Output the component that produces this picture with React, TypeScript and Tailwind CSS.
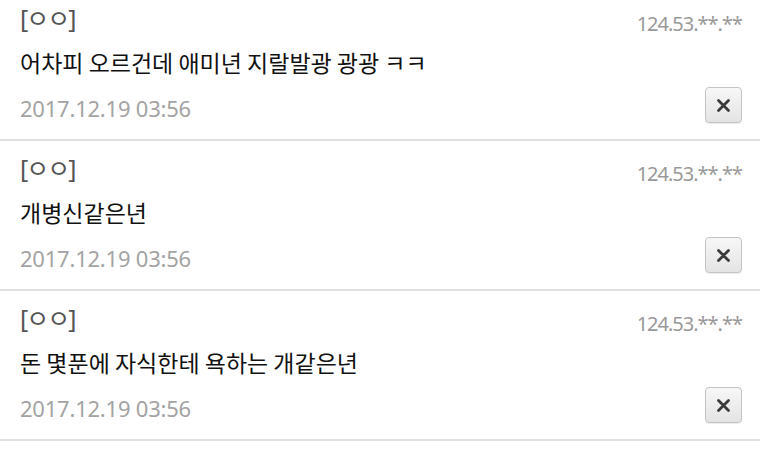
const comments = [
  { name: "[ㅇㅇ]", ip: "124.53.**.**", text: "어차피 오르건데 애미년 지랄발광 광광 ㅋㅋ", date: "2017.12.19 03:56" },
  { name: "[ㅇㅇ]", ip: "124.53.**.**", text: "개병신같은년", date: "2017.12.19 03:56" },
  { name: "[ㅇㅇ]", ip: "124.53.**.**", text: "돈 몇푼에 자식한테 욕하는 개같은년", date: "2017.12.19 03:56" },
];

function CloseButton() {
  return (
    <button className="flex h-[36px] w-[37px] items-center justify-center rounded-[4px] border border-[#c4c4c4] bg-gradient-to-b from-[#f7f7f7] to-[#e4e4e4] shadow-[0_1px_1px_rgba(0,0,0,0.08)]">
      <svg width="15" height="15" viewBox="0 0 15 15">
        <path d="M2.5 2.5 L12.5 12.5 M12.5 2.5 L2.5 12.5" stroke="#3a3a3a" strokeWidth="2.8" strokeLinecap="round" />
      </svg>
    </button>
  );
}

export default function App() {
  return (
    <div
      className="h-[452px] w-[760px] overflow-hidden bg-white"
      style={{ fontFamily: '"Noto Sans", "Noto Sans CJK KR", sans-serif' }}
    >
      <ul className="-mt-[9px]">
        {comments.map((c, i) => (
          <li key={i} className="border-b-2 border-[#e0e0e0] pl-[20px] pr-[18px] pt-[10px] pb-[16px]">
            <div className="flex h-[36px] items-start justify-between">
              <span className="mt-[1px] text-[25px] leading-[32px] tracking-[-0.08em] text-[#555]">{c.name}</span>
              <span className="mt-[8px] text-[20px] leading-[30px] tracking-[-0.05em] text-[#999]">{c.ip}</span>
            </div>
            <p className="mt-[10px] text-[23px] leading-[30px] text-[#111]" style={{ fontFamily: '"Noto Sans CJK KR", sans-serif' }}>
              {c.text}
            </p>
            <div className="mt-[10px] flex items-center justify-between">
              <span className="pt-[6px] text-[22px] leading-[30px] tracking-[-0.01em] text-[#a3a3a3]">{c.date}</span>
              <CloseButton />
            </div>
          </li>
        ))}
      </ul>
    </div>
  );
}
